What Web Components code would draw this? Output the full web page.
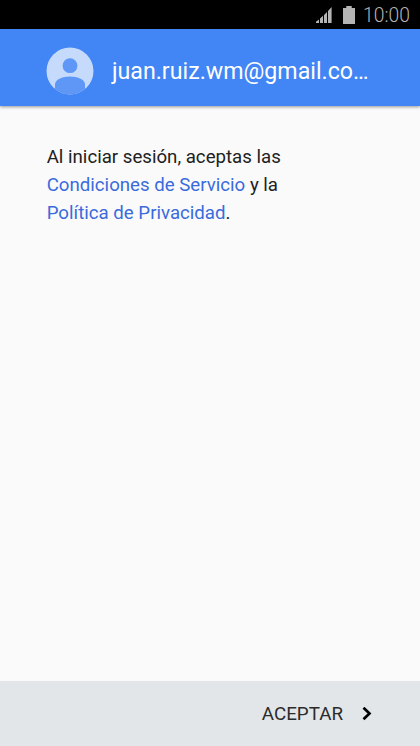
<!DOCTYPE html>
<html lang="es">
<head>
<meta charset="utf-8">
<title>Iniciar sesión</title>
<style>
  html, body {
    margin: 0;
    height: 100%;
  }

  body {
    font-family: Roboto, "Liberation Sans", sans-serif;
    overflow: hidden;
  }

  a {
    color: #3a6bdc;
    text-decoration: none;
  }
</style>
</head>
<body>
<setup-screen>
  <status-bar slot="status">10:00</status-bar>
  <account-header slot="header">juan.ruiz.wm@gmail.co…</account-header>
  <terms-text>Al iniciar sesión, aceptas las<br><a href="#">Condiciones de Servicio</a> y la<br><a href="#">Política de Privacidad</a>.</terms-text>
  <action-bar slot="footer">ACEPTAR</action-bar>
</setup-screen>

<script>
class SetupScreen extends HTMLElement {
  constructor(){
    super();
    this.attachShadow({mode: 'open'});
  }

  connectedCallback(){
    this.shadowRoot.innerHTML = `
      <style>
        :host {
          display: flex;
          flex-direction: column;
          height: 100vh;
          background: #fafafa;
        }

        main {
          flex: 1;
          padding: 37px 47px 0 46.7px;
        }
      </style>
      <slot name="status"></slot>
      <slot name="header"></slot>
      <main><slot></slot></main>
      <slot name="footer"></slot>
    `;
  }
}

class StatusBar extends HTMLElement {
  constructor(){
    super();
    this.attachShadow({mode: 'open'});
  }

  connectedCallback(){
    this.shadowRoot.innerHTML = `
      <style>
        :host {
          display: flex;
          align-items: center;
          justify-content: flex-end;
          flex: none;
          box-sizing: border-box;
          height: 29px;
          padding-right: 11px;
          background: #000;
          color: #b4b4b4;
          font-size: 19.3px;
          font-weight: 300;
          line-height: 29px;
        }

        svg {
          flex: none;
          display: block;
          fill: #b4b4b4;
        }

        .signal {
          margin-right: 11px;
        }

        .battery {
          margin-right: 8px;
        }

        .time {
          width: 46px;
          padding-top: 1px;
          white-space: nowrap;
        }
      </style>
      <svg class="signal" width="16" height="16" viewBox="0 0 16 16">
        <path d="M0 16v-1.200l3-2.400V16zM4 16v-4.600l3-2.600V16zM8 16V8l3-3v11zM12 16V4l3.600-4V16z"/>
      </svg>
      <svg class="battery" width="12" height="18" viewBox="0 0 12 18">
        <path d="M3.300 0h5.400v2H12v16H0V2h3.300z"/>
      </svg>
      <span class="time"><slot></slot></span>
    `;
  }
}

class AccountHeader extends HTMLElement {
  constructor(){
    super();
    this.attachShadow({mode: 'open'});
  }

  connectedCallback(){
    this.shadowRoot.innerHTML = `
      <style>
        :host {
          display: flex;
          align-items: center;
          flex: none;
          box-sizing: border-box;
          height: 77px;
          padding: 7px 47px 0 46px;
          background: #4285f4;
          box-shadow: 0 1px 3px rgba(0, 0, 0, .4);
          color: #fff;
          font-size: 23.2px;
        }

        svg {
          flex: none;
          margin-right: 18px;
        }

        span {
          white-space: nowrap;
        }
      </style>
      <svg width="48" height="48" viewBox="0 0 48 48">
        <clipPath id="disc"><circle cx="24" cy="24" r="23.5"/></clipPath>
        <circle cx="24" cy="24" r="23.5" fill="#c6dafc"/>
        <circle cx="24" cy="18.7" r="7.4" fill="#5e97f6"/>
        <path clip-path="url(#disc)" fill="#5e97f6" d="M9 48V37.500C9 32.500 16 29.500 24 29.500S39 32.500 39 37.500V48z"/>
      </svg>
      <span><slot></slot></span>
    `;
  }
}

class TermsText extends HTMLElement {
  constructor(){
    super();
    this.attachShadow({mode: 'open'});
  }

  connectedCallback(){
    this.shadowRoot.innerHTML = `
      <style>
        :host {
          display: block;
          color: #212121;
          font-size: 18.67px;
          line-height: 28px;
        }
      </style>
      <slot></slot>
    `;
  }
}

class ActionBar extends HTMLElement {
  constructor(){
    super();
    this.attachShadow({mode: 'open'});
  }

  connectedCallback(){
    this.shadowRoot.innerHTML = `
      <style>
        :host {
          display: flex;
          align-items: center;
          justify-content: flex-end;
          flex: none;
          box-sizing: border-box;
          height: 65px;
          padding-right: 48px;
          background: #e3e6e9;
          color: #2b2b2b;
          font-size: 18.8px;
        }

        svg {
          margin-left: 19px;
        }
      </style>
      <slot></slot>
      <svg width="10" height="14" viewBox="0 0 10 14">
        <path d="M1.500 0.700L7.500 6.500L1.500 12.300" fill="none" stroke="#000" stroke-width="2.700"/>
      </svg>
    `;
  }
}

customElements.define('setup-screen', SetupScreen);
customElements.define('status-bar', StatusBar);
customElements.define('account-header', AccountHeader);
customElements.define('terms-text', TermsText);
customElements.define('action-bar', ActionBar);
</script>
</body>
</html>
